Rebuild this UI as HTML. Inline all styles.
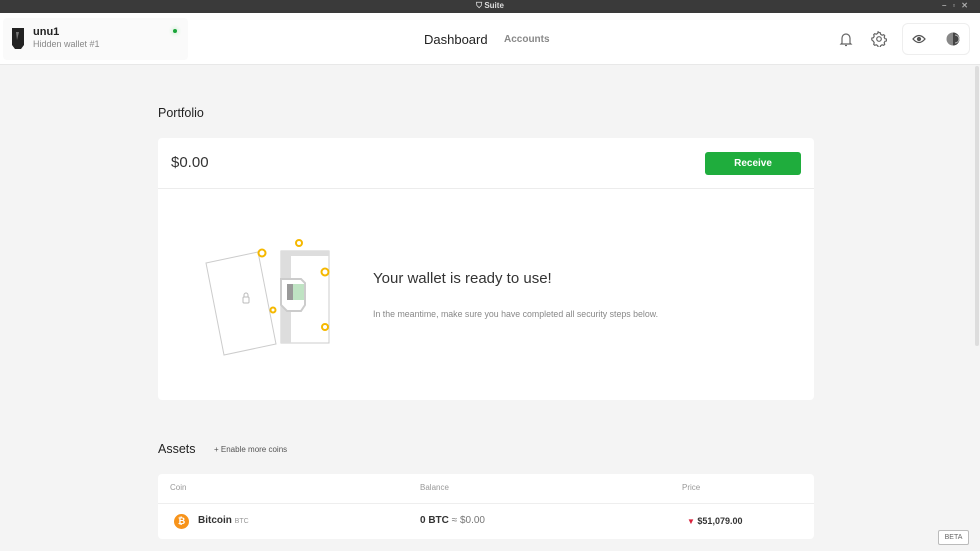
<!DOCTYPE html>
<html><head><style>
*{margin:0;padding:0;box-sizing:border-box}
body{width:980px;height:551px;overflow:hidden;background:#f4f4f4;font-family:"Liberation Sans",sans-serif;position:relative;color:#333}
.abs{position:absolute}
.title{left:0;top:0;width:980px;height:13px;background:#3a3a3a;color:#ddd;font-size:8px;text-align:center;line-height:12px;font-weight:bold}
.hdr{left:0;top:13px;width:980px;height:52px;background:#fff;border-bottom:1px solid #e8e8e8}
.card{background:#fff;border-radius:4px}
</style></head><body>
<div class="abs title">⛉ Suite<span style="position:absolute;right:6px;top:0;color:#aaa;letter-spacing:6px">–▫✕</span></div>
<div class="abs hdr">
  <div class="abs" style="left:3px;top:5px;width:185px;height:42px;background:#fafafa;border-radius:4px"></div>
  <svg class="abs" style="left:11px;top:14px" width="14" height="24"><path d="M1 1h12v17l-3 4H4l-3-4z" fill="#222"/><path d="M5 5l3 0-2 8z" fill="#777"/></svg>
  <div class="abs" style="left:33px;top:13px;font-size:11px;font-weight:bold;color:#222">unu1</div>
  <div class="abs" style="left:33px;top:26px;font-size:9px;color:#888">Hidden wallet #1</div>
  <div class="abs" style="left:173px;top:16px;width:4px;height:4px;border-radius:50%;background:#1aa53a;box-shadow:0 0 3px 2px #dff3e2"></div>
  <div class="abs" style="left:424px;top:19px;font-size:13px;color:#222">Dashboard</div>
  <div class="abs" style="left:504px;top:21px;font-size:10px;color:#888;font-weight:bold">Accounts</div>
  <svg class="abs" style="left:839px;top:19px" width="14" height="15" fill="none" stroke="#666" stroke-width="1.2"><path d="M3 11V6a4 4 0 0 1 8 0v5l1 1H2z"/><path d="M6 13.5h2"/></svg>
  <svg class="abs" style="left:871px;top:18px" width="16" height="16" fill="none" stroke="#666" stroke-width="1.2"><circle cx="8" cy="8" r="2.3"/><path d="M8 1.5l1.3.3.4 1.6 1.4.8 1.6-.5 1 1-.5 1.6.8 1.4 1.6.4v1.8l-1.6.4-.8 1.4.5 1.6-1 1-1.6-.5-1.4.8-.4 1.6H7.1l-.4-1.6-1.4-.8-1.6.5-1-1 .5-1.6-.8-1.4L.8 8.9V7.1l1.6-.4.8-1.4-.5-1.6 1-1 1.6.5 1.4-.8.4-1.6z"/></svg>
  <div class="abs" style="left:902px;top:10px;width:68px;height:32px;border:1px solid #eee;border-radius:6px"></div>
  <svg class="abs" style="left:912px;top:20px" width="14" height="12" fill="none" stroke="#555" stroke-width="1.3"><path d="M1 6q6-7 12 0q-6 7-12 0z"/><circle cx="7" cy="6" r="1.5" fill="#555"/></svg>
  <svg class="abs" style="left:946px;top:19px" width="14" height="14"><circle cx="7" cy="7" r="6.5" fill="#888"/><path d="M7 .5a6.5 6.5 0 0 1 0 13z" fill="#444"/><path d="M9 3a4 4 0 0 1 0 8" stroke="#bbb" fill="none"/></svg>
</div>
<div class="abs" style="left:975px;top:66px;width:4px;height:280px;background:#ddd;border-radius:2px"></div>
<div class="abs" style="left:158px;top:106px;font-size:12.5px;color:#222">Portfolio</div>
<div class="abs card" style="left:158px;top:138px;width:656px;height:262px">
  <div class="abs" style="left:13px;top:16px;font-size:15px;color:#333">$0.00</div>
  <div class="abs" style="left:547px;top:14px;width:96px;height:23px;background:#1fad3d;border-radius:3px;color:#fff;font-size:10px;font-weight:bold;text-align:center;line-height:23px">Receive</div>
  <div class="abs" style="left:0;top:50px;width:656px;height:1px;background:#ececec"></div>
  <svg class="abs" style="left:45px;top:98px" width="135" height="120">
    <rect x="78" y="15" width="48" height="92" fill="#fff" stroke="#ccc"/>
    <path d="M78 15h48v5H88v87H78z" fill="#ddd"/>
    <path d="M78 43h20l4 4v22l-4 6H84l-6-6z" fill="#fff" stroke="#ccc" stroke-width="2"/>
    <rect x="84" y="48" width="17" height="16" fill="#bfe3c3"/><path d="M84 48h6v16h-6z" fill="#999"/>
    <path d="M3 27l52-11 18 92-52 11z" fill="#fff" stroke="#ccc"/>
    <rect x="40" y="61" width="6" height="6" rx="1" fill="none" stroke="#bbb"/><path d="M41 61v-2a2 2 0 0 1 4 0v2" fill="none" stroke="#bbb"/>
    <g fill="#fff" stroke="#f5b800" stroke-width="2"><circle cx="59" cy="17" r="3.5"/><circle cx="96" cy="7" r="3"/><circle cx="122" cy="36" r="3.5"/><circle cx="70" cy="74" r="2.5"/><circle cx="122" cy="91" r="3"/></g>
  </svg>
  <div class="abs" style="left:215px;top:132px;font-size:15px;color:#333">Your wallet is ready to use!</div>
  <div class="abs" style="left:215px;top:171px;font-size:8.8px;color:#888">In the meantime, make sure you have completed all security steps below.</div>
</div>
<div class="abs" style="left:158px;top:442px;font-size:12.5px;color:#222">Assets</div>
<div class="abs" style="left:214px;top:445px;font-size:8px;color:#555">+ Enable more coins</div>
<div class="abs card" style="left:158px;top:474px;width:656px;height:65px">
  <div class="abs" style="left:12px;top:9px;font-size:8px;color:#999">Coin</div>
  <div class="abs" style="left:262px;top:9px;font-size:8px;color:#999">Balance</div>
  <div class="abs" style="left:524px;top:9px;font-size:8px;color:#999">Price</div>
  <div class="abs" style="left:0;top:29px;width:656px;height:1px;background:#eee"></div>
  <div class="abs" style="left:16px;top:40px;width:15px;height:15px;border-radius:50%;background:#f7931a;color:#fff;font-size:9px;font-weight:bold;text-align:center;line-height:15px">₿</div>
  <div class="abs" style="left:40px;top:41px;font-size:10px;font-weight:bold;color:#333">Bitcoin <span style="font-weight:normal;font-size:7px;color:#999">BTC</span></div>
  <div class="abs" style="left:262px;top:41px;font-size:10px;color:#333"><b>0 BTC</b> <span style="color:#777">≈ $0.00</span></div>
  <div class="abs" style="left:529px;top:42px;font-size:9px;font-weight:bold;color:#333"><span style="color:#d8223c;font-size:8px">▼</span> $51,079.00</div>
</div>
<div class="abs" style="left:938px;top:530px;width:31px;height:15px;border:1px solid #bbb;border-radius:2px;font-size:7px;color:#666;text-align:center;line-height:13px;background:#fff">BETA</div>
</body></html>
